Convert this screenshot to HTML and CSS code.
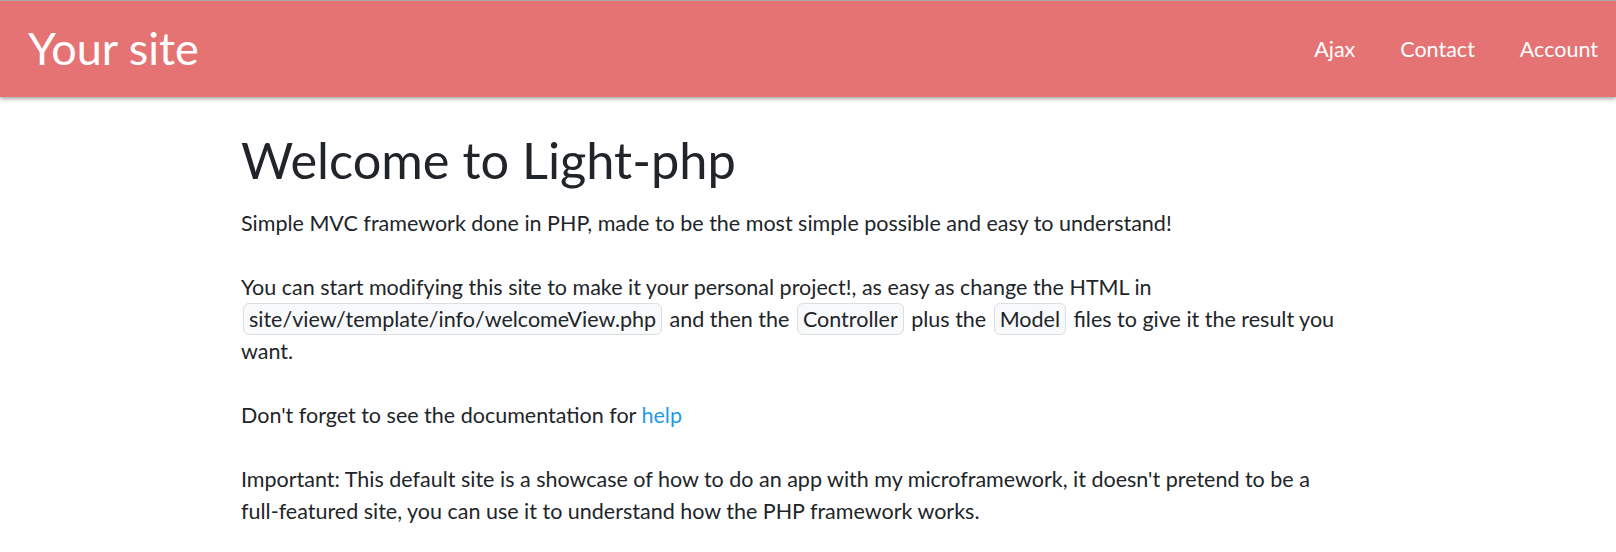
FILE: index.html
```html
<!DOCTYPE html>
<html lang="en">
<head>
<meta charset="utf-8">
<title>Your site</title>
<link rel="stylesheet" href="styles.css">
</head>
<body>
<header class="navbar">
  <a class="brand" href="#">Your site</a>
  <nav class="nav">
    <a class="nav-link" href="#">Ajax</a>
    <a class="nav-link" href="#">Contact</a>
    <a class="nav-link" href="#">Account</a>
  </nav>
</header>
<main class="content">
  <h1 class="title">Welcome to Light-php</h1>
  <p>Simple MVC framework done in PHP, made to be the most simple possible and easy to understand!</p>
  <p>You can start modifying this site to make it your personal project!, as easy as change the HTML in <code class="tag">site/view/template/info/welcomeView.php</code> and then the <code class="tag">Controller</code> plus the <code class="tag">Model</code> files to give it the result you want.</p>
  <p>Don't forget to see the documentation for <a class="link" href="#">help</a></p>
  <p>Important: This default site is a showcase of how to do an app with my microframework, it doesn't pretend to be a full-featured site, you can use it to understand how the PHP framework works.</p>
</main>
</body>
</html>
```
FILE: styles.css
```css
* { box-sizing: border-box; }
html, body { margin: 0; padding: 0; }
body {
  font-family: Lato, "Open Sans", sans-serif;
  color: #212529;
  background: #fff;
  border-top: 1px solid #a9a9a9;
}
.navbar {
  height: 96px;
  background: #e57373;
  display: flex;
  align-items: center;
  justify-content: space-between;
  padding: 0 18px 0 28px;
  box-shadow: 0 2px 4px rgba(0,0,0,0.35);
}
.brand {
  color: #fff;
  text-decoration: none;
  font-size: 45px;
  line-height: 1;
  margin-top: -1px;
}
.nav {
  display: flex;
  gap: 45px;
}
.nav-link {
  color: #fff;
  text-decoration: none;
  font-size: 21.5px;
}
.content {
  max-width: 1134px;
  margin: 0 auto;
  padding: 33px 28px 0 0;
}
.title {
  font-size: 50.5px;
  font-weight: 400;
  line-height: 60px;
  margin: 0 0 17px;
}
.content p {
  font-size: 21.5px;
  line-height: 32px;
  margin: 0 0 32px;
}
.tag {
  font-family: inherit;
  font-size: inherit;
  background: #f8f9fa;
  border: 1.5px solid #dedede;
  border-radius: 6px;
  padding: 2px 5px;
  margin: 0 2px;
}
.link {
  color: #1f9be6;
  text-decoration: none;
}
```
